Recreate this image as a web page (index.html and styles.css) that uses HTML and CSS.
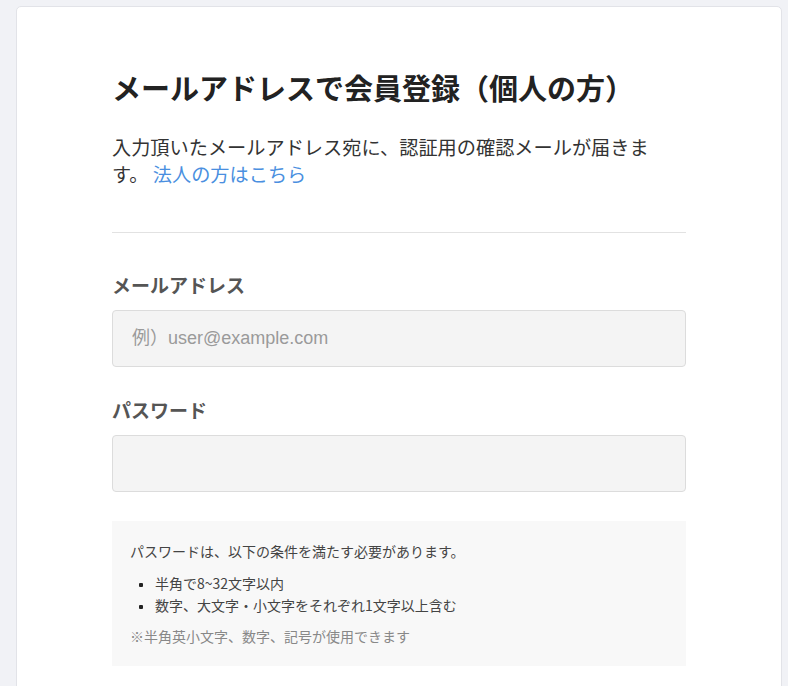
FILE: index.html
```html
<!DOCTYPE html>
<html lang="ja">
<head>
<meta charset="utf-8">
<title>メールアドレスで会員登録</title>
<link rel="stylesheet" href="styles.css">
</head>
<body>
<div class="page">
  <main class="card">
    <h1 class="title">メールアドレスで会員登録（個人の方）</h1>
    <p class="lead">入力頂いたメールアドレス宛に、認証用の確認メールが届きま<br>す。 <a class="link" href="#">法人の方はこちら</a></p>
    <hr class="divider">
    <form class="form">
      <div class="field">
        <label class="label" for="email">メールアドレス</label>
        <input class="input" id="email" type="text" placeholder="例）user@example.com">
      </div>
      <div class="field">
        <label class="label" for="pw">パスワード</label>
        <input class="input" id="pw" type="password">
      </div>
      <div class="rules">
        <p class="rules-head">パスワードは、以下の条件を満たす必要があります。</p>
        <ul class="rules-list">
          <li class="rule">半角で8~32文字以内</li>
          <li class="rule">数字、大文字・小文字をそれぞれ1文字以上含む</li>
        </ul>
        <p class="rules-note">※半角英小文字、数字、記号が使用できます</p>
      </div>
    </form>
  </main>
</div>
</body>
</html>
```
FILE: styles.css
```css
* { box-sizing: border-box; }
html, body { margin: 0; padding: 0; }
body {
  background: #f1f2f6;
  font-family: "Noto Sans CJK JP", "Noto Sans", sans-serif;
  color: #333;
}
.page {
  padding: 6px 6px 0 16px;
  height: 686px;
  overflow: hidden;
}
.card {
  background: #fff;
  border: 1px solid #e2e3e8;
  border-radius: 5px;
  padding: 60px 95px 40px;
  min-height: 700px;
}
.title {
  margin: 0;
  font-size: 29px;
  line-height: 40px;
  font-weight: 700;
  color: #222;
}
.lead {
  margin: 27px 0 0;
  font-size: 19.2px;
  line-height: 27px;
  color: #333;
}
.link {
  color: #4a8fe0;
  text-decoration: none;
}
.divider {
  margin: 44px 0 0;
  border: 0;
  border-top: 1px solid #e2e2e2;
  height: 0;
}
.form {
  display: flex;
  flex-direction: column;
}
.field {
  display: flex;
  flex-direction: column;
  gap: 12px;
  margin-top: 38px;
}
.field + .field { margin-top: 29px; }
.label {
  font-size: 19px;
  line-height: 27px;
  font-weight: 700;
  color: #555;
}
.input {
  height: 57px;
  width: 100%;
  background: #f4f4f4;
  border: 1px solid #dcdcdc;
  border-radius: 4px;
  padding: 0 19px;
  font-family: "Liberation Sans", "Noto Sans CJK JP", sans-serif;
  font-size: 18px;
  color: #333;
  outline: none;
}
.input::placeholder { color: #9a9a9a; }
.rules {
  margin-top: 29px;
  background: #f8f8f8;
  padding: 20px 18px 19px;
  font-size: 14px;
  color: #444;
}
.rules-head {
  margin: 0;
  line-height: 21px;
}
.rules-list {
  list-style: none;
  margin: 10px 0 0;
  padding: 0 0 0 9px;
}
.rule {
  display: flex;
  align-items: center;
  gap: 12px;
  line-height: 22px;
}
.rule::before {
  content: "";
  width: 4px;
  height: 4px;
  border-radius: 1px;
  background: #222;
  flex: none;
  margin-top: 4px;
}
.rules-note {
  margin: 9px 0 0;
  line-height: 22px;
  color: #888;
}
```
